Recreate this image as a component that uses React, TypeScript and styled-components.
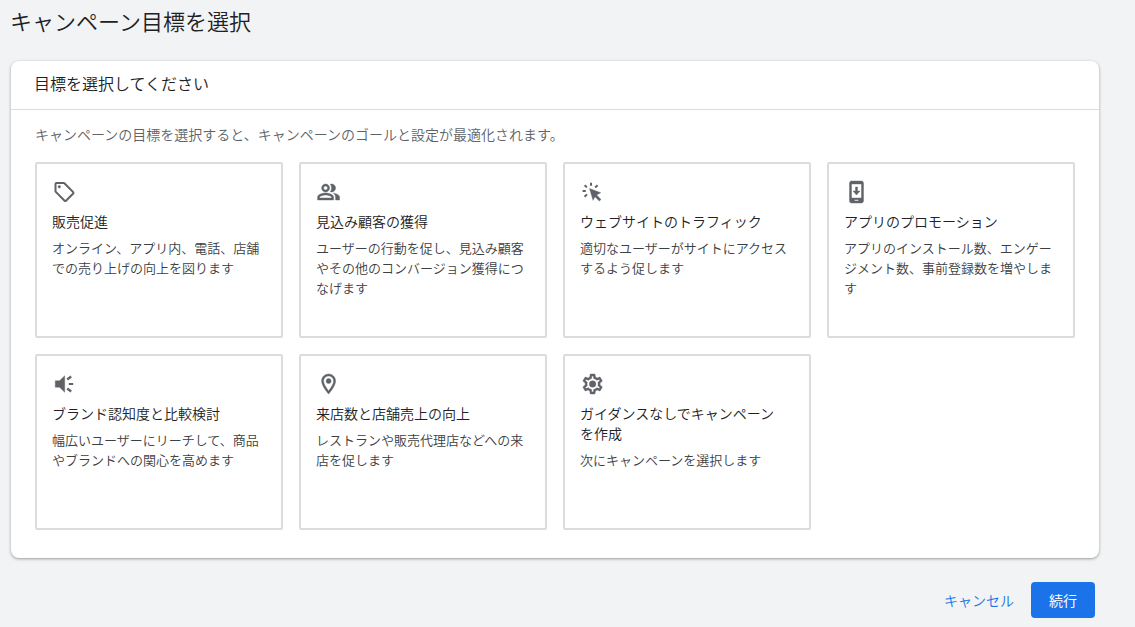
import React from "react";
import styled, { createGlobalStyle } from "styled-components";

const GlobalStyle = createGlobalStyle`
  *, *::before, *::after { box-sizing: border-box; }
  body {
    margin: 0;
    background: #f1f3f4;
    color: #202124;
    font-family: "Noto Sans CJK JP", sans-serif;
    font-weight: 350;
  }
  button { font-family: inherit; cursor: pointer; }
`;

const Page = styled.main`
  padding: 6px 36px 8px 10px;
`;

const PageTitle = styled.h1`
  margin: 0 0 27px;
  font-size: 22px;
  line-height: 28px;
  font-weight: 350;
`;

const Panel = styled.section`
  margin-left: 1px;
  background: #fff;
  border-radius: 8px;
  box-shadow: 0 1px 2px rgba(60, 64, 67, 0.3), 0 1px 3px 1px rgba(60, 64, 67, 0.15);
`;

const PanelTitle = styled.h2`
  margin: 0;
  padding: 10px 23px 14px;
  border-bottom: 1px solid #dadce0;
  font-size: 16px;
  line-height: 24px;
  font-weight: 350;
`;

const PanelBody = styled.div`
  padding: 14px 24px 28px;
`;

const Hint = styled.p`
  margin: 0 0 18px;
  color: #5f6368;
  font-size: 14px;
  line-height: 20px;
`;

const Goals = styled.div`
  display: grid;
  grid-template-columns: repeat(4, minmax(0, 1fr));
  gap: 16px;
`;

const Goal = styled.button`
  display: flex;
  flex-direction: column;
  align-items: flex-start;
  min-height: 176px;
  padding: 16px 20px 16px 15px;
  border: 2px solid #dadce0;
  border-radius: 2px;
  background: #fff;
  font-weight: 350;
  text-align: left;
`;

const Icon = styled.svg`
  width: 24px;
  height: 24px;
  margin-bottom: 7px;
  fill: #5f6368;
  stroke: #5f6368;
  stroke-width: 0.4;
`;

const GoalName = styled.span`
  margin-bottom: 7px;
  padding-right: 8px;
  color: #202124;
  font-size: 14px;
  line-height: 20px;
`;

const GoalText = styled.span`
  color: #3c4043;
  font-size: 13px;
  line-height: 20px;
`;

const Actions = styled.div`
  display: flex;
  justify-content: flex-end;
  gap: 8px;
  padding: 24px 4px 0;
`;

const Action = styled.button<{ $primary?: boolean }>`
  height: 36px;
  padding: 0 ${(p) => (p.$primary ? 18 : 9)}px;
  border: 0;
  border-radius: 4px;
  background: ${(p) => (p.$primary ? "#1a73e8" : "transparent")};
  color: ${(p) => (p.$primary ? "#fff" : "#1a73e8")};
  font-size: 14px;
  line-height: 20px;
  font-weight: ${(p) => (p.$primary ? 400 : 350)};
`;

const tag = (
  <>
    <path
      fill="none"
      strokeWidth="2"
      strokeLinejoin="round"
      d="M4.500 3h7.200c.3 0 .5.100.7.300l8.800 8.800c.4.400.4 1 0 1.400l-7.200 7.200c-.4.400-1 .4-1.400 0l-8.800-8.800c-.2-.2-.3-.4-.3-.7V4c0-.6.4-1 1-1z"
    />
    <circle cx="7.3" cy="6.8" r="1.3" />
  </>
);

const people = (
  <path transform="translate(.6 0)" d="M16.67 13.13C18.04 14.06 19 15.32 19 17v3h4v-3c0-2.18-3.57-3.47-6.33-3.87zM15 12c2.21 0 4-1.79 4-4s-1.79-4-4-4c-.47 0-.91.1-1.33.24C14.5 5.27 15 6.58 15 8s-.5 2.73-1.33 3.76c.42.14.86.24 1.33.24zM9 12c2.21 0 4-1.79 4-4s-1.79-4-4-4-4 1.79-4 4 1.79 4 4 4zm0-6c1.1 0 2 .9 2 2s-.9 2-2 2-2-.9-2-2 .9-2 2-2zM9 13c-2.67 0-8 1.34-8 4v3h16v-3c0-2.66-5.33-4-8-4zm6 5H3v-.99C3.2 16.29 6.3 15 9 15s5.8 1.29 6 2v1z" />
);

const click = (
  <>
    <path d="M9.500 8.500l11.200 4.200-4 2.400 4.300 4.300-1.700 1.600-4.300-4.200-2 3.500z" />
    <path
      fill="none"
      strokeWidth="2"
      d="M11 2.700v3M2.600 11h3.200M4.600 5.200l2.300 2.200M17.600 5.200l-2.400 2.200M4.600 16.800l2.400-2.400"
    />
  </>
);

const phone = (
  <path
    transform="translate(.5 0)"
    fillRule="evenodd"
    d="M7 1h10c1.1 0 2 .9 2 2v18c0 1.1-.9 2-2 2H7c-1.1 0-2-.9-2-2V3c0-1.1.9-2 2-2zm0 3v14h10V4zm3 15.800v1.200h4v-1.200zM11 7h2v4h2.500L12 15l-3.500-4H11z"
  />
);

const speaker = (
  <>
    <path d="M3.300 8.800v6.400h4.200l5.200 5V3.800l-5.200 5z" />
    <path
      fill="none"
      strokeWidth="2.2"
      d="M16.800 12h4.400M15.200 7.500l4-3M15.200 16.500l4 3"
    />
  </>
);

const pin = (
  <g transform="translate(.6 0)">
    <path d="M12 2C8.13 2 5 5.13 5 9c0 5.25 7 13 7 13s7-7.75 7-13c0-3.87-3.13-7-7-7zM7 9c0-2.76 2.24-5 5-5s5 2.24 5 5c0 2.88-2.88 7.19-5 9.88C9.92 16.21 7 11.85 7 9z" />
    <circle cx="12" cy="9" r="2.5" />
  </g>
);

const gear = (
  <g transform="translate(.6 0)">
    <path d="M19.43 12.98c.04-.32.07-.64.07-.98 0-.34-.03-.66-.07-.98l2.11-1.65c.19-.15.24-.42.12-.64l-2-3.46c-.09-.16-.26-.25-.44-.25-.06 0-.12.01-.17.03l-2.49 1c-.52-.4-1.08-.73-1.69-.98l-.38-2.65C14.46 2.18 14.25 2 14 2h-4c-.25 0-.46.18-.49.42l-.38 2.65c-.61.25-1.17.59-1.69.98l-2.49-1c-.06-.02-.12-.03-.18-.03-.17 0-.34.09-.43.25l-2 3.46c-.13.22-.07.49.12.64l2.11 1.65c-.04.32-.07.65-.07.98 0 .33.03.66.07.98l-2.11 1.65c-.19.15-.24.42-.12.64l2 3.46c.09.16.26.25.44.25.06 0 .12-.01.17-.03l2.49-1c.52.4 1.08.73 1.69.98l.38 2.65c.03.24.24.42.49.42h4c.25 0 .46-.18.49-.42l.38-2.65c.61-.25 1.17-.59 1.69-.98l2.49 1c.06.02.12.03.18.03.17 0 .34-.09.43-.25l2-3.46c.12-.22.07-.49-.12-.64l-2.11-1.65zm-1.98-1.71c.04.31.05.52.05.73 0 .21-.02.43-.05.73l-.14 1.13.89.7 1.08.84-.7 1.21-1.27-.51-1.04-.42-.9.68c-.43.32-.84.56-1.25.73l-1.06.43-.16 1.13-.2 1.35h-1.4l-.19-1.35-.16-1.13-1.06-.43c-.43-.18-.83-.41-1.23-.71l-.91-.7-1.06.43-1.27.51-.7-1.21 1.08-.84.89-.7-.14-1.13c-.03-.31-.05-.54-.05-.74s.02-.43.05-.73l.14-1.13-.89-.7-1.08-.84.7-1.21 1.27.51 1.04.42.9-.68c.43-.32.84-.56 1.25-.73l1.06-.43.16-1.13.2-1.35h1.39l.19 1.35.16 1.13 1.06.43c.43.18.83.41 1.23.71l.91.7 1.06-.43 1.27-.51.7 1.21-1.07.85-.89.7.14 1.13z" />
    <circle cx="12" cy="12" r="3.3" />
  </g>
);

const goals = [
  { icon: tag, name: "販売促進", text: "オンライン、アプリ内、電話、店舗での売り上げの向上を図ります" },
  { icon: people, name: "見込み顧客の獲得", text: "ユーザーの行動を促し、見込み顧客やその他のコンバージョン獲得につなげます" },
  { icon: click, name: "ウェブサイトのトラフィック", text: "適切なユーザーがサイトにアクセスするよう促します" },
  { icon: phone, name: "アプリのプロモーション", text: "アプリのインストール数、エンゲージメント数、事前登録数を増やします" },
  { icon: speaker, name: "ブランド認知度と比較検討", text: "幅広いユーザーにリーチして、商品やブランドへの関心を高めます" },
  { icon: pin, name: "来店数と店舗売上の向上", text: "レストランや販売代理店などへの来店を促します" },
  { icon: gear, name: "ガイダンスなしでキャンペーンを作成", text: "次にキャンペーンを選択します" },
];

export default function App() {
  return (
    <>
      <GlobalStyle />
      <Page lang="ja">
        <PageTitle>キャンペーン目標を選択</PageTitle>
        <Panel>
          <PanelTitle>目標を選択してください</PanelTitle>
          <PanelBody>
            <Hint>キャンペーンの目標を選択すると、キャンペーンのゴールと設定が最適化されます。</Hint>
            <Goals>
              {goals.map((goal) => (
                <Goal key={goal.name} type="button">
                  <Icon viewBox="0 0 24 24" aria-hidden="true">{goal.icon}</Icon>
                  <GoalName>{goal.name}</GoalName>
                  <GoalText>{goal.text}</GoalText>
                </Goal>
              ))}
            </Goals>
          </PanelBody>
        </Panel>
        <Actions>
          <Action type="button">キャンセル</Action>
          <Action type="button" $primary>続行</Action>
        </Actions>
      </Page>
    </>
  );
}
